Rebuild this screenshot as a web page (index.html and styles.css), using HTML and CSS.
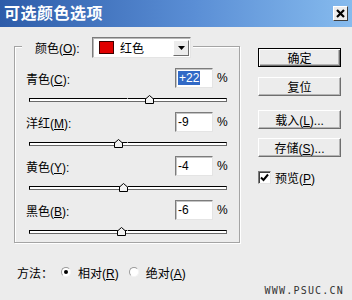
FILE: index.html
```html
<!DOCTYPE html>
<html lang="zh-CN">
<head>
    <meta charset="UTF-8">
    <title>可选颜色选项</title>
    <link rel="stylesheet" href="styles.css">
</head>
<body>
<div class="dialog">
    <div class="titlebar">
        <span class="title">可选颜色选项</span>
        <span class="close">
            <svg width="9" height="9" viewBox="0 0 9 9"><path d="M1 1 L8 8 M8 1 L1 8" stroke="#000" stroke-width="2.2"/></svg>
        </span>
    </div>

    <div class="main">
        <div class="group">
            <div class="group-head">
                <span class="label">颜色(<u>O</u>):</span>
                <div class="dropdown">
                    <span class="swatch"></span>
                    <span class="dd-text">红色</span>
                    <span class="dd-btn">
                        <svg width="7" height="4" viewBox="0 0 7 4"><path d="M0 0 H7 L3.5 4 Z" fill="#000"/></svg>
                    </span>
                </div>
            </div>

            <div class="row">
                <span class="label">青色(<u>C</u>):</span>
                <span class="field"><span class="selected">+22</span></span>
                <span class="pct">%</span>
            </div>
            <div class="slider">
                <div class="track"></div>
                <span class="thumb" style="left: 61%"><svg width="9" height="9" viewBox="0 0 9 9"><path d="M0.5 8.5 V4 L4.5 0.5 L8.5 4 V8.5 Z" fill="#f2f2f2" stroke="#000"/></svg></span>
            </div>

            <div class="row">
                <span class="label">洋红(<u>M</u>):</span>
                <span class="field">-9</span>
                <span class="pct">%</span>
            </div>
            <div class="slider">
                <div class="track"></div>
                <span class="thumb" style="left: 45.5%"><svg width="9" height="9" viewBox="0 0 9 9"><path d="M0.5 8.5 V4 L4.5 0.5 L8.5 4 V8.5 Z" fill="#f2f2f2" stroke="#000"/></svg></span>
            </div>

            <div class="row">
                <span class="label">黄色(<u>Y</u>):</span>
                <span class="field">-4</span>
                <span class="pct">%</span>
            </div>
            <div class="slider">
                <div class="track"></div>
                <span class="thumb" style="left: 48%"><svg width="9" height="9" viewBox="0 0 9 9"><path d="M0.5 8.5 V4 L4.5 0.5 L8.5 4 V8.5 Z" fill="#f2f2f2" stroke="#000"/></svg></span>
            </div>

            <div class="row">
                <span class="label">黑色(<u>B</u>):</span>
                <span class="field">-6</span>
                <span class="pct">%</span>
            </div>
            <div class="slider">
                <div class="track"></div>
                <span class="thumb" style="left: 47%"><svg width="9" height="9" viewBox="0 0 9 9"><path d="M0.5 8.5 V4 L4.5 0.5 L8.5 4 V8.5 Z" fill="#f2f2f2" stroke="#000"/></svg></span>
            </div>
        </div>

        <div class="side">
            <button class="btn default">确定</button>
            <button class="btn reset">复位</button>
            <button class="btn load">载入(<u>L</u>)...</button>
            <button class="btn save">存储(<u>S</u>)...</button>
            <label class="check">
                <span class="box">
                    <svg width="9" height="9" viewBox="0 0 9 9"><path d="M1 4.5 L3.5 7 L8 1.5" fill="none" stroke="#000" stroke-width="2"/></svg>
                </span>
                <span class="check-text">预览(<u>P</u>)</span>
            </label>
        </div>
    </div>

    <div class="method">
        <span class="method-label">方法：</span>
        <span class="radio on"></span>
        <span class="radio-text">相对(<u>R</u>)</span>
        <span class="radio"></span>
        <span class="radio-text">绝对(<u>A</u>)</span>
    </div>

    <div class="watermark">WWW.PSUC.CN</div>
</div>
</body>
</html>
```

FILE: styles.css
```css
* {
    box-sizing: border-box;
}

body {
    margin: 0;
    background: #ececec;
    font-family: "Liberation Sans", "Noto Sans CJK SC", sans-serif;
    font-size: 12px;
    color: #000;
}

u {
    text-decoration: underline;
}

.dialog {
    width: 352px;
    height: 300px;
    background: #ececec;
    overflow: hidden;
}

.titlebar {
    height: 27px;
    display: flex;
    align-items: center;
    justify-content: space-between;
    padding: 0 4px;
    background: linear-gradient(to right, #2d5ca9, #5a8ed5 55%, #86bbee);
}

.title {
    color: #fff;
    font-weight: bold;
    font-size: 16px;
    letter-spacing: 0.5px;
    line-height: 1;
}

.close {
    width: 15px;
    height: 15px;
    background: #ececec;
    border: 1px solid;
    border-color: #fff #404040 #404040 #fff;
    display: flex;
    align-items: center;
    justify-content: center;
}

.main {
    display: flex;
    align-items: flex-start;
    padding-left: 14px;
}

/* group box */
.group {
    width: 226px;
    margin-top: 19px;
    padding: 0 11px;
    border: 1px solid #a4a4a4;
    box-shadow: 1px 1px 0 #fff, inset 1px 1px 0 #fff;
}

.group-head {
    display: flex;
    align-items: center;
    width: fit-content;
    height: 21px;
    margin: -10px 0 10px -4px;
    padding: 0 2px 0 13px;
    background: #ececec;
}

.group-head .label {
    width: 57px;
}

.dropdown {
    width: 99px;
    height: 21px;
    display: flex;
    align-items: center;
    background: #fff;
    border: 1px solid;
    border-color: #7c7c7c #e4e4e4 #e4e4e4 #7c7c7c;
    box-shadow: inset 1px 1px 0 #b8b8b8;
    padding: 0 1px 0 6px;
}

.swatch {
    width: 15px;
    height: 13px;
    background: #e00000;
    border: 1px solid #400000;
}

.dd-text {
    flex: 1;
    margin-left: 6px;
}

.dd-btn {
    width: 16px;
    height: 16px;
    display: flex;
    align-items: center;
    justify-content: center;
    background: #ececec;
    border: 1px solid;
    border-color: #fff #6e6e6e #6e6e6e #fff;
}

/* rows */
.row {
    display: flex;
    align-items: center;
    height: 20px;
}

.row .label {
    flex: 1;
}

.field {
    width: 38px;
    height: 20px;
    display: flex;
    align-items: center;
    padding-left: 2px;
    background: #fff;
    border: 1px solid;
    border-color: #7c7c7c #e4e4e4 #e4e4e4 #7c7c7c;
    box-shadow: inset 1px 1px 0 #c4c4c4;
}

.selected {
    background: #3169c6;
    color: #fff;
    padding: 0 1px;
    line-height: 14px;
}

.pct {
    width: 11px;
    margin-left: 4px;
}

.slider {
    position: relative;
    height: 24px;
    margin: 0 1px 0 3px;
}

.slider:last-child {
    height: 22px;
}

.track {
    position: relative;
    top: 10px;
    height: 4px;
    background: #fff;
    border: 1px solid #000;
    border-right-color: #6a6a6a;
    border-bottom-color: #6a6a6a;
}

.track::after {
    content: "";
    position: absolute;
    left: 97px;
    top: -1px;
    width: 1px;
    height: 1px;
    background: #9a9a9a;
}

.thumb {
    position: absolute;
    top: 7px;
    width: 9px;
    height: 9px;
    margin-left: -5px;
    line-height: 0;
}

/* side buttons */
.side {
    width: 83px;
    margin-left: 18px;
    padding-top: 21px;
    display: flex;
    flex-direction: column;
}

.btn {
    height: 19px;
    padding: 0;
    font-family: inherit;
    font-size: 12px;
    color: #000;
    background: #ececec;
    border: 1px solid;
    border-color: #fff #6e6e6e #6e6e6e #fff;
    box-shadow: inset -1px -1px 0 #b4b4b4;
}

.btn.default {
    border: 1px solid #000;
    box-shadow: inset 1px 1px 0 #fff, inset -1px -1px 0 #6e6e6e, inset -2px -2px 0 #b4b4b4;
}

.btn.reset {
    margin-top: 10px;
}

.btn.load {
    margin-top: 14px;
}

.btn.save {
    margin-top: 9px;
}

.check {
    display: flex;
    align-items: center;
    gap: 4px;
    margin-top: 14px;
    height: 13px;
}

.check .box {
    width: 13px;
    height: 13px;
    display: flex;
    align-items: center;
    justify-content: center;
    background: #fff;
    border: 1px solid;
    border-color: #7c7c7c #e4e4e4 #e4e4e4 #7c7c7c;
    box-shadow: inset 1px 1px 0 #404040;
}

/* method row */
.method {
    display: flex;
    align-items: center;
    height: 16px;
    margin-top: 21px;
    padding-left: 17px;
}

.method-label {
    margin-right: 8px;
}

.radio {
    width: 10px;
    height: 10px;
    border-radius: 50%;
    background: #fff;
    border: 1px solid;
    border-color: #9a9a9a #f4f4f4 #f4f4f4 #9a9a9a;
    display: flex;
    align-items: center;
    justify-content: center;
    margin-right: 7px;
}

.radio.on::after {
    content: "";
    width: 4px;
    height: 4px;
    border-radius: 50%;
    background: #000;
}

.radio-text {
    margin-right: 10px;
}

.watermark {
    margin-top: 5px;
    height: 12px;
    padding-right: 8px;
    text-align: right;
    font-family: "DejaVu Sans Mono", monospace;
    font-size: 10px;
    letter-spacing: 1.2px;
    color: #333;
    line-height: 12px;
}
```
